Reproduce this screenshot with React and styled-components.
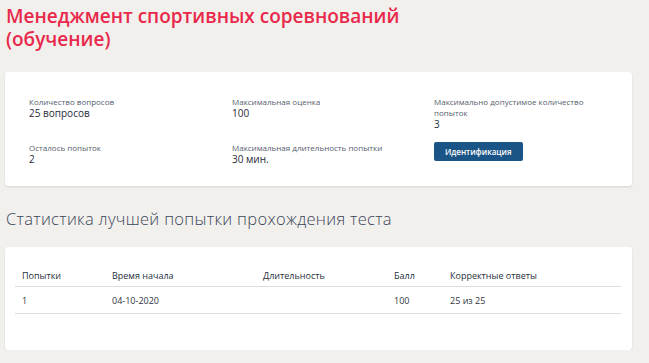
import styled, { createGlobalStyle } from "styled-components";

const GlobalStyle = createGlobalStyle`
  body {
    margin: 0;
    background: #f2f0ed;
    font-family: "Open Sans", "Noto Sans", sans-serif;
  }
`;

const Page = styled.div`
  width: 627px;
  padding: 5px 0 0 5px;
`;

const Title = styled.h1`
  margin: 0 0 21px 1px;
  font-size: 19px;
  line-height: 23px;
  font-weight: 600;
  color: #e8294b;
`;

const Card = styled.div`
  background: #fff;
  border-radius: 3px;
  box-shadow: 0 1px 2px rgba(0, 0, 0, 0.12);
`;

const InfoCard = styled(Card)`
  display: grid;
  grid-template-columns: 203px 202px 1fr;
  grid-template-rows: 46px 20px;
  padding: 24px 0 24px 24px;
`;

const Field = styled.div`
  padding-right: 40px;
`;

const Label = styled.div`
  font-size: 8px;
  line-height: 11px;
  color: #55606e;
`;

const Value = styled.div`
  font-size: 10px;
  line-height: 12px;
  color: #1f2a37;
`;

const Button = styled.button`
  display: block;
  height: 19px;
  padding: 0 11px;
  border: none;
  border-radius: 2px;
  background: #1b5587;
  color: #fff;
  font-family: inherit;
  font-size: 8px;
  font-weight: 600;
  cursor: pointer;
`;

const Subtitle = styled.h2`
  margin: 21px 0 16px 1px;
  font-size: 16.5px;
  line-height: 24px;
  font-weight: 300;
  letter-spacing: 0.3px;
  color: #3a4658;
`;

const TableCard = styled(Card)`
  padding: 14px 11px 36px 10px;
`;

const Table = styled.table`
  width: 100%;
  table-layout: fixed;
  border-collapse: collapse;
  font-size: 9px;
  color: #2f3640;
`;

const Th = styled.th`
  width: ${(p) => p.$w || "auto"};
  height: 21px;
  padding: 4px 0 0 7px;
  text-align: left;
  font-weight: 400;
  color: #26303c;
  border-bottom: 1px solid #dedcd9;
`;

const Td = styled.td`
  height: 26px;
  padding: 0 0 0 7px;
  border-bottom: 1px solid #dedcd9;
`;

const columns = [
  { title: "Попытки", w: "83px" },
  { title: "Время начала", w: "144px" },
  { title: "Длительность", w: "124px" },
  { title: "Балл", w: "49px" },
  { title: "Корректные ответы" },
];

const rows = [["1", "04-10-2020", "", "100", "25 из 25"]];

export default function App() {
  return (
    <>
      <GlobalStyle />
      <Page>
        <Title>
          Менеджмент спортивных соревнований
          <br />
          (обучение)
        </Title>
        <InfoCard>
          <Field>
            <Label>Количество вопросов</Label>
            <Value>25 вопросов</Value>
          </Field>
          <Field>
            <Label>Максимальная оценка</Label>
            <Value>100</Value>
          </Field>
          <Field>
            <Label>Максимально допустимое количество попыток</Label>
            <Value>3</Value>
          </Field>
          <Field>
            <Label>Осталось попыток</Label>
            <Value>2</Value>
          </Field>
          <Field>
            <Label>Максимальная длительность попытки</Label>
            <Value>30 мин.</Value>
          </Field>
          <Field>
            <Button>Идентификация</Button>
          </Field>
        </InfoCard>
        <Subtitle>Статистика лучшей попытки прохождения теста</Subtitle>
        <TableCard>
          <Table>
            <thead>
              <tr>
                {columns.map((c) => (
                  <Th key={c.title} $w={c.w}>
                    {c.title}
                  </Th>
                ))}
              </tr>
            </thead>
            <tbody>
              {rows.map((r, i) => (
                <tr key={i}>
                  {r.map((cell, j) => (
                    <Td key={j}>{cell}</Td>
                  ))}
                </tr>
              ))}
            </tbody>
          </Table>
        </TableCard>
      </Page>
    </>
  );
}
